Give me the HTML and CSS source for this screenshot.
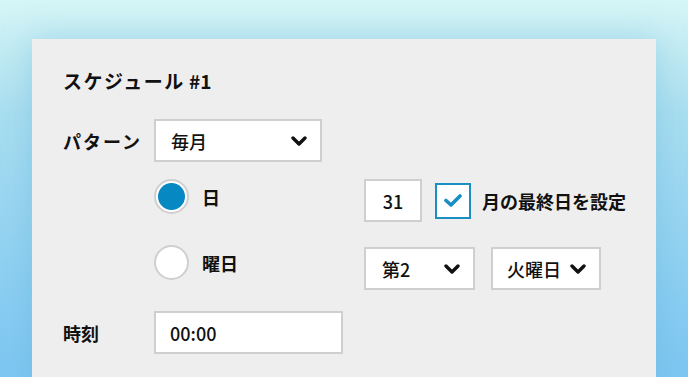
FILE: index.html
```html
<!DOCTYPE html>
<html lang="ja">
<head>
<meta charset="utf-8">
<title>スケジュール</title>
<link rel="stylesheet" href="styles.css">
</head>
<body>
<div class="card">
  <h1 class="title"><span class="kana">スケジュール</span> #1</h1>

  <div class="row pattern-row">
    <span class="label label-kana">パターン</span>
    <div class="select select-pattern">
      <span>毎月</span>
      <svg class="chev" viewBox="0 0 16 10"><polyline points="2,2 8,8 14,2"/></svg>
    </div>
  </div>

  <div class="options">
    <div class="radios">
      <div class="radio-opt">
        <span class="radio checked"></span>
        <span class="label">日</span>
      </div>
      <div class="radio-opt">
        <span class="radio"></span>
        <span class="label">曜日</span>
      </div>
    </div>
    <div class="extras">
      <div class="extra-row">
        <div class="input input-day">31</div>
        <span class="checkbox">
          <svg viewBox="0 0 18 13"><polyline points="2,6.5 7,11 16,2"/></svg>
        </span>
        <span class="label">月の最終日を設定</span>
      </div>
      <div class="extra-row">
        <div class="select select-week">
          <span>第2</span>
          <svg class="chev" viewBox="0 0 16 10"><polyline points="2,2 8,8 14,2"/></svg>
        </div>
        <div class="select select-dow">
          <span>火曜日</span>
          <svg class="chev" viewBox="0 0 16 10"><polyline points="2,2 8,8 14,2"/></svg>
        </div>
      </div>
    </div>
  </div>

  <div class="row time-row">
    <span class="label">時刻</span>
    <div class="input input-time">00:00</div>
  </div>
</div>
</body>
</html>
```

FILE: styles.css
```css
html, body {
  margin: 0;
  padding: 0;
}
body {
  width: 688px;
  height: 377px;
  overflow: hidden;
  background: linear-gradient(180deg, #d6f6f6 0%, #a9def0 30%, #7cc6f2 100%);
  font-family: "Noto Sans CJK JP", "Noto Sans", sans-serif;
  color: #111;
}
.card {
  margin: 39px 0 0 32px;
  width: 624px;
  height: 338px;
  box-sizing: border-box;
  background: #eeeeee;
  padding: 29px 0 0 31px;
  box-shadow: 0 0 30px rgba(90, 170, 210, 0.35);
}
.title {
  margin: 0;
  font-size: 19px;
  line-height: 26px;
  font-weight: 700;
}
.title .kana {
  letter-spacing: 1.5px;
}
.label {
  font-size: 18px;
  font-weight: 700;
  line-height: 26px;
}
.label-kana {
  letter-spacing: 2px;
}
.row {
  display: flex;
  align-items: center;
}
.row > .label {
  width: 91px;
  flex: none;
}
.pattern-row {
  margin-top: 25px;
}
.select, .input {
  box-sizing: border-box;
  height: 43px;
  background: #fff;
  border: 2px solid #cfcfcf;
  font-size: 18px;
  font-weight: 500;
  display: flex;
  align-items: center;
}
.select {
  justify-content: space-between;
}
.chev {
  width: 16px;
  height: 10px;
  flex: none;
}
.chev polyline {
  fill: none;
  stroke: #111;
  stroke-width: 3.4;
  stroke-linecap: round;
  stroke-linejoin: round;
}
.select-pattern {
  width: 168px;
  padding: 0 13px 0 15px;
}
.options {
  display: flex;
  margin: 17px 0 0 91px;
}
.radios {
  width: 210px;
  display: flex;
  flex-direction: column;
  gap: 31px;
}
.radio-opt {
  display: flex;
  align-items: center;
  gap: 13px;
  height: 35px;
}
.radio {
  box-sizing: border-box;
  width: 35px;
  height: 35px;
  border-radius: 50%;
  border: 2px solid #cfcfcf;
  background: #fff;
  position: relative;
}
.radio.checked::after {
  content: "";
  position: absolute;
  left: 2px;
  top: 2px;
  width: 27px;
  height: 27px;
  border-radius: 50%;
  background: #0688c2;
}
.extras {
  display: flex;
  flex-direction: column;
  gap: 25px;
}
.extra-row {
  display: flex;
  align-items: center;
}
.input-day {
  width: 58px;
  justify-content: center;
}
.checkbox {
  box-sizing: border-box;
  width: 36px;
  height: 36px;
  margin: 0 11px 0 13px;
  border: 2px solid #1a8fc4;
  background: #fff;
  display: flex;
  align-items: center;
  justify-content: center;
}
.checkbox svg {
  width: 18px;
  height: 13px;
}
.checkbox polyline {
  fill: none;
  stroke: #1a8fc4;
  stroke-width: 3.6;
  stroke-linecap: round;
  stroke-linejoin: round;
}
.select-week {
  width: 111px;
  padding: 0 13px 0 16px;
}
.select-dow {
  width: 110px;
  margin-left: 16px;
  padding: 0 13px 0 14px;
}
.time-row {
  margin-top: 21px;
}
.input-time {
  width: 189px;
  padding-left: 14px;
}
```
